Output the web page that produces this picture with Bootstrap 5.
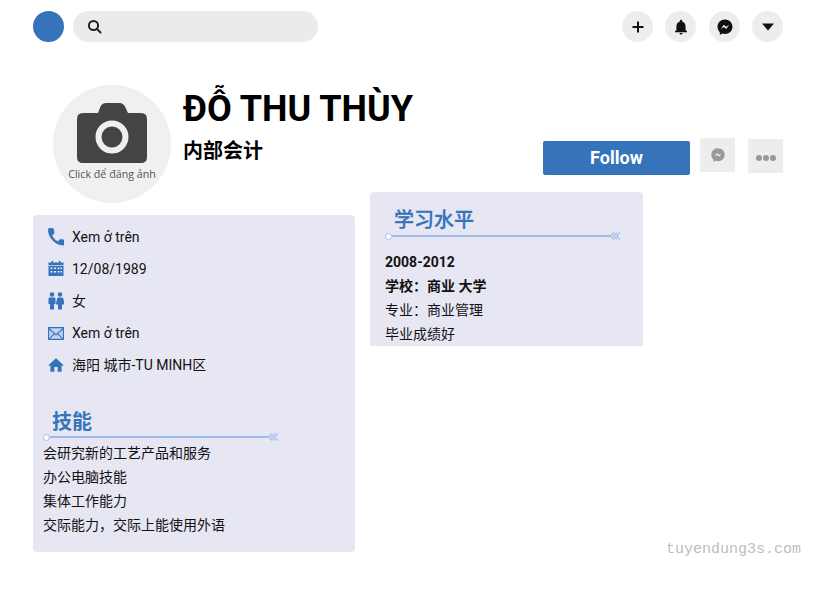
<!DOCTYPE html>
<html lang="zh">
<head>
  <meta charset="UTF-8">
  <meta name="viewport" content="width=device-width, initial-scale=1">
  <title>ĐỖ THU THÙY</title>
  <link href="https://cdn.jsdelivr.net/npm/bootstrap@5.3.0/dist/css/bootstrap.min.css" rel="stylesheet">
  <style>
    body { font-family: Roboto, "Noto Sans CJK SC", sans-serif; font-size: 14px; color: #111; background: #fff; }
    .page-wrap { padding: 11px 32px 0 33px; }
    .top-avatar { width: 31px; height: 31px; background: #3573bb; }
    .search-box { width: 245px; height: 31px; background: #ebebeb; padding-left: 14px; margin-left: 9px; }
    .round-btn { width: 31px; height: 31px; background: #ededed; }
    .top-actions { gap: 12px; }
    .msg-round { margin-left: 1px; }
    .profile-head { height: 107px; margin-top: 43px; padding-left: 20px; }
    .photo-circle { width: 118px; height: 118px; background: #f0f0f0; flex: none; padding-top: 17px; }
    .photo-note { font-family: "Open Sans", sans-serif; font-size: 10.7px; line-height: 14px; color: #555; margin-top: 3px; white-space: nowrap; }
    .profile-name { font-size: 36px; line-height: 40px; font-weight: 700; color: #000; margin: 4px 0 0 12px; }
    .profile-job { font-size: 20px; line-height: 28px; font-weight: 700; color: #000; margin: 8px 0 0 12px; }
    .follow-btn { width: 147px; height: 34px; background: #3573bb; border-radius: 2px; color: #fff; font-size: 18px; font-weight: 700; line-height: 33px; text-align: center; margin-top: 56px; }
    .square-btn { width: 35px; height: 34px; background: #ededed; border-radius: 1px; }
    .msg-square { margin: 53px 0 0 10px; }
    .more-square { margin: 54px 0 0 13px; }
    .dot-row { gap: 1px; margin-top: 4px; }
    .dot-row span { width: 6px; height: 6px; border-radius: 50%; background: #999; }
    .body-row { height: 366px; }
    .left-panel { width: 322px; height: 337px; margin-top: 23px; background: #e7e7f3; border-radius: 4px; padding: 6px 10px 0; flex: none; }
    .right-panel { width: 273px; height: 154px; margin-left: 15px; background: #e7e7f3; border-radius: 4px 4px 0 0; padding: 16px 15px 0; flex: none; }
    .info-row { height: 32px; padding-left: 5px; }
    .info-row svg { width: 16px; height: 18px; flex: none; margin-right: 8px; }
    .sect-title { font-size: 20px; line-height: 24px; font-weight: 700; color: #3573bb; padding-left: 9px; margin-bottom: -1px; }
    .title-thin { font-weight: 500; -webkit-text-stroke: .3px #3573bb; margin-bottom: 0; }
    .title-line { width: 236px; height: 8px; }
    .line-dot { width: 7px; height: 7px; border-radius: 50%; background: #fff; border: 1px solid #9dbce6; flex: none; }
    .line-bar { height: 2px; background: #9dbce6; flex: 1; }
    .text-row { line-height: 24px; height: 24px; white-space: nowrap; }
    .skills-wrap { margin-top: 29px; }
    .edu-rows { margin-top: 10px; }
    .watermark { font-family: "Liberation Mono", monospace; font-size: 15px; line-height: 16px; color: #bdbdbd; margin-right: -18px; }
  </style>
</head>
<body>
  <div class="page-wrap">
    <div class="d-flex align-items-center">
      <div class="top-avatar rounded-circle"></div>
      <div class="search-box rounded-pill d-flex align-items-center">
        <svg width="16" height="16" viewBox="0 0 16 16" fill="none" stroke="#222" stroke-width="2" stroke-linecap="round"><circle cx="6.500" cy="6.500" r="4.600"/><path d="M10 10 13.500 13.500"/></svg>
      </div>
      <div class="ms-auto d-flex top-actions">
        <div class="round-btn rounded-circle d-flex align-items-center justify-content-center">
          <svg width="14" height="14" viewBox="0 0 14 14" stroke="#111" stroke-width="2"><path d="M7 1.500v11M1.500 7h11"/></svg>
        </div>
        <div class="round-btn rounded-circle d-flex align-items-center justify-content-center">
          <svg width="16" height="16" viewBox="3 1.500 18 21" fill="#111"><path d="M12 22c1.100 0 2-.9 2-2h-4c0 1.100.89 2 2 2zm6-6v-5c0-3.070-1.640-5.640-4.500-6.320V4c0-.83-.67-1.500-1.500-1.500s-1.500.67-1.500 1.500v.68C7.630 5.360 6 7.920 6 11v5l-2 2v1h16v-1l-2-2z"/></svg>
        </div>
        <div class="round-btn msg-round rounded-circle d-flex align-items-center justify-content-center">
          <svg width="18" height="18" viewBox="0 0 24 24"><path fill="#111" d="M12 2C6.400 2 2 6.100 2 11.700c0 2.900 1.200 5.400 3.100 7.200v3.600l3.300-1.800c1.100.4 2.300.6 3.600.6 5.600 0 10-4.100 10-9.600S17.600 2 12 2z"/><path fill="#ededed" d="m6.500 14.500 3.800-5.600 3.200 2.600 4-2.600-3.800 5.600-3.200-2.600z"/></svg>
        </div>
        <div class="round-btn rounded-circle d-flex align-items-center justify-content-center">
          <svg width="12" height="8" viewBox="0 0 12 8" fill="#111"><path d="M0 .5h12L6 7.500z"/></svg>
        </div>
      </div>
    </div>

    <div class="profile-head d-flex">
      <div class="photo-circle rounded-circle d-flex flex-column align-items-center">
        <svg width="70" height="62" viewBox="0 0 70 62">
          <path fill="#444" d="M6 11h15l2.500-6.500Q25 1 29 1h14q3 0 5 3.500L51 11h13q6 0 6 6v38q0 6-6 6H6q-6 0-6-6V17q0-6 6-6z"/>
          <circle cx="35" cy="35" r="13.500" fill="none" stroke="#efefef" stroke-width="6"/>
        </svg>
        <div class="photo-note">Click để đăng ảnh</div>
      </div>
      <div class="flex-grow-1">
        <div class="profile-name">ĐỖ THU THÙY</div>
        <div class="profile-job">内部会计</div>
      </div>
      <div class="d-flex align-items-start">
        <div class="follow-btn">Follow</div>
        <div class="square-btn msg-square d-flex align-items-center justify-content-center">
          <svg width="16" height="16" viewBox="0 0 24 24"><path fill="#999" d="M12 2C6.400 2 2 6.100 2 11.700c0 2.900 1.200 5.400 3.100 7.200v3.600l3.300-1.800c1.100.4 2.300.6 3.600.6 5.600 0 10-4.100 10-9.600S17.600 2 12 2z"/><path fill="#ededed" d="m6.500 14.500 3.800-5.600 3.200 2.600 4-2.600-3.800 5.600-3.200-2.600z"/></svg>
        </div>
        <div class="square-btn more-square d-flex align-items-center justify-content-center">
          <div class="dot-row d-flex"><span></span><span></span><span></span></div>
        </div>
      </div>
    </div>

    <div class="body-row d-flex align-items-start">
      <div class="left-panel">
        <div class="info-row d-flex align-items-center">
          <svg viewBox="2.500 2.500 17.500 19.500" preserveAspectRatio="none" fill="#3573bb"><path d="M6.620 10.790c1.440 2.830 3.760 5.140 6.590 6.590l2.200-2.200c.27-.27.67-.36 1.020-.24 1.120.37 2.330.57 3.570.57.55 0 1 .45 1 1V20c0 .55-.45 1-1 1-9.390 0-17-7.610-17-17 0-.55.45-1 1-1h3.500c.55 0 1 .45 1 1 0 1.250.2 2.450.57 3.570.11.35.03.74-.25 1.020l-2.200 2.200z" stroke="#3573bb" stroke-width="1"/></svg>
          <span>Xem ở trên</span>
        </div>
        <div class="info-row d-flex align-items-center">
          <svg viewBox="0 0 16 18"><path fill="#3573bb" d="M.5 2.500h3V1h1.500v1.500h6V1h1.500v1.500h3V16H.5z"/><path fill="#e7e7f3" d="M2.500 7.500h2V9h-2zm3.500 0h2V9H6zm3.500 0h2V9h-2zm3 0h1.500V9H12.500zM2.500 11h2v1.500h-2zM6 11h2v1.500H6zm3.500 0h2v1.500h-2zm3 0h1.500v1.500h-1.500zM.5 5h15v.8H.5z"/></svg>
          <span>12/08/1989</span>
        </div>
        <div class="info-row d-flex align-items-center">
          <svg viewBox="0 0 16 18" fill="#3573bb"><circle cx="4" cy="2.500" r="2.300"/><circle cx="12" cy="2.500" r="2.300"/><path d="M.5 6.500Q.5 5.500 1.500 5.500h5q1 0 1 1V12H6v5.500H2V12H.5zM10 5.500h4Q15 5.500 15.500 7l1 5.500H14v5h-4v-5H7.800L9 7q.3-1.500 1-1.500z"/></svg>
          <span>女</span>
        </div>
        <div class="info-row d-flex align-items-center">
          <svg viewBox="0 0 16 18"><path fill="#3573bb" d="M0 3h16v13H0z"/><path fill="#c3d3ec" d="M1.500 4.300h13L8 10zM1.200 5.600l4.500 4-4.500 4.600zM14.800 5.600v8.600l-4.500-4.600zM6.500 10.300 8 11.500l1.500-1.200 4.500 4.500H2z"/></svg>
          <span>Xem ở trên</span>
        </div>
        <div class="info-row d-flex align-items-center">
          <svg viewBox="2 3 20 17" fill="#3573bb"><path d="M10 20v-6h4v6h5v-8h3L12 3 2 12h3v8z"/></svg>
          <span>海阳 城市-TU MINH区</span>
        </div>

        <div class="skills-wrap">
          <div class="sect-title">技能</div>
          <div class="title-line d-flex align-items-center">
            <span class="line-dot"></span><span class="line-bar"></span>
            <svg width="11" height="8" viewBox="0 0 11 8" fill="none" stroke="#a9c4ea" stroke-width="1.500"><path d="M4 .5.500 4 4 7.500M7 .5 3.500 4 7 7.500M10 .5 6.500 4l3.500 3.500"/></svg>
          </div>
          <div class="text-row">会研究新的工艺产品和服务</div>
          <div class="text-row">办公电脑技能</div>
          <div class="text-row">集体工作能力</div>
          <div class="text-row">交际能力，交际上能使用外语</div>
        </div>
      </div>

      <div class="right-panel">
        <div class="sect-title title-thin">学习水平</div>
        <div class="title-line d-flex align-items-center">
          <span class="line-dot"></span><span class="line-bar"></span>
          <svg width="11" height="8" viewBox="0 0 11 8" fill="none" stroke="#a9c4ea" stroke-width="1.500"><path d="M4 .5.500 4 4 7.500M7 .5 3.500 4 7 7.500M10 .5 6.500 4l3.500 3.500"/></svg>
        </div>
        <div class="edu-rows">
          <div class="text-row fw-bold">2008-2012</div>
          <div class="text-row fw-bold">学校：商业 大学</div>
          <div class="text-row">专业：商业管理</div>
          <div class="text-row">毕业成绩好</div>
        </div>
      </div>

      <div class="flex-grow-1 align-self-end text-end">
        <div class="watermark">tuyendung3s.com</div>
      </div>
    </div>
  </div>
</body>
</html>
